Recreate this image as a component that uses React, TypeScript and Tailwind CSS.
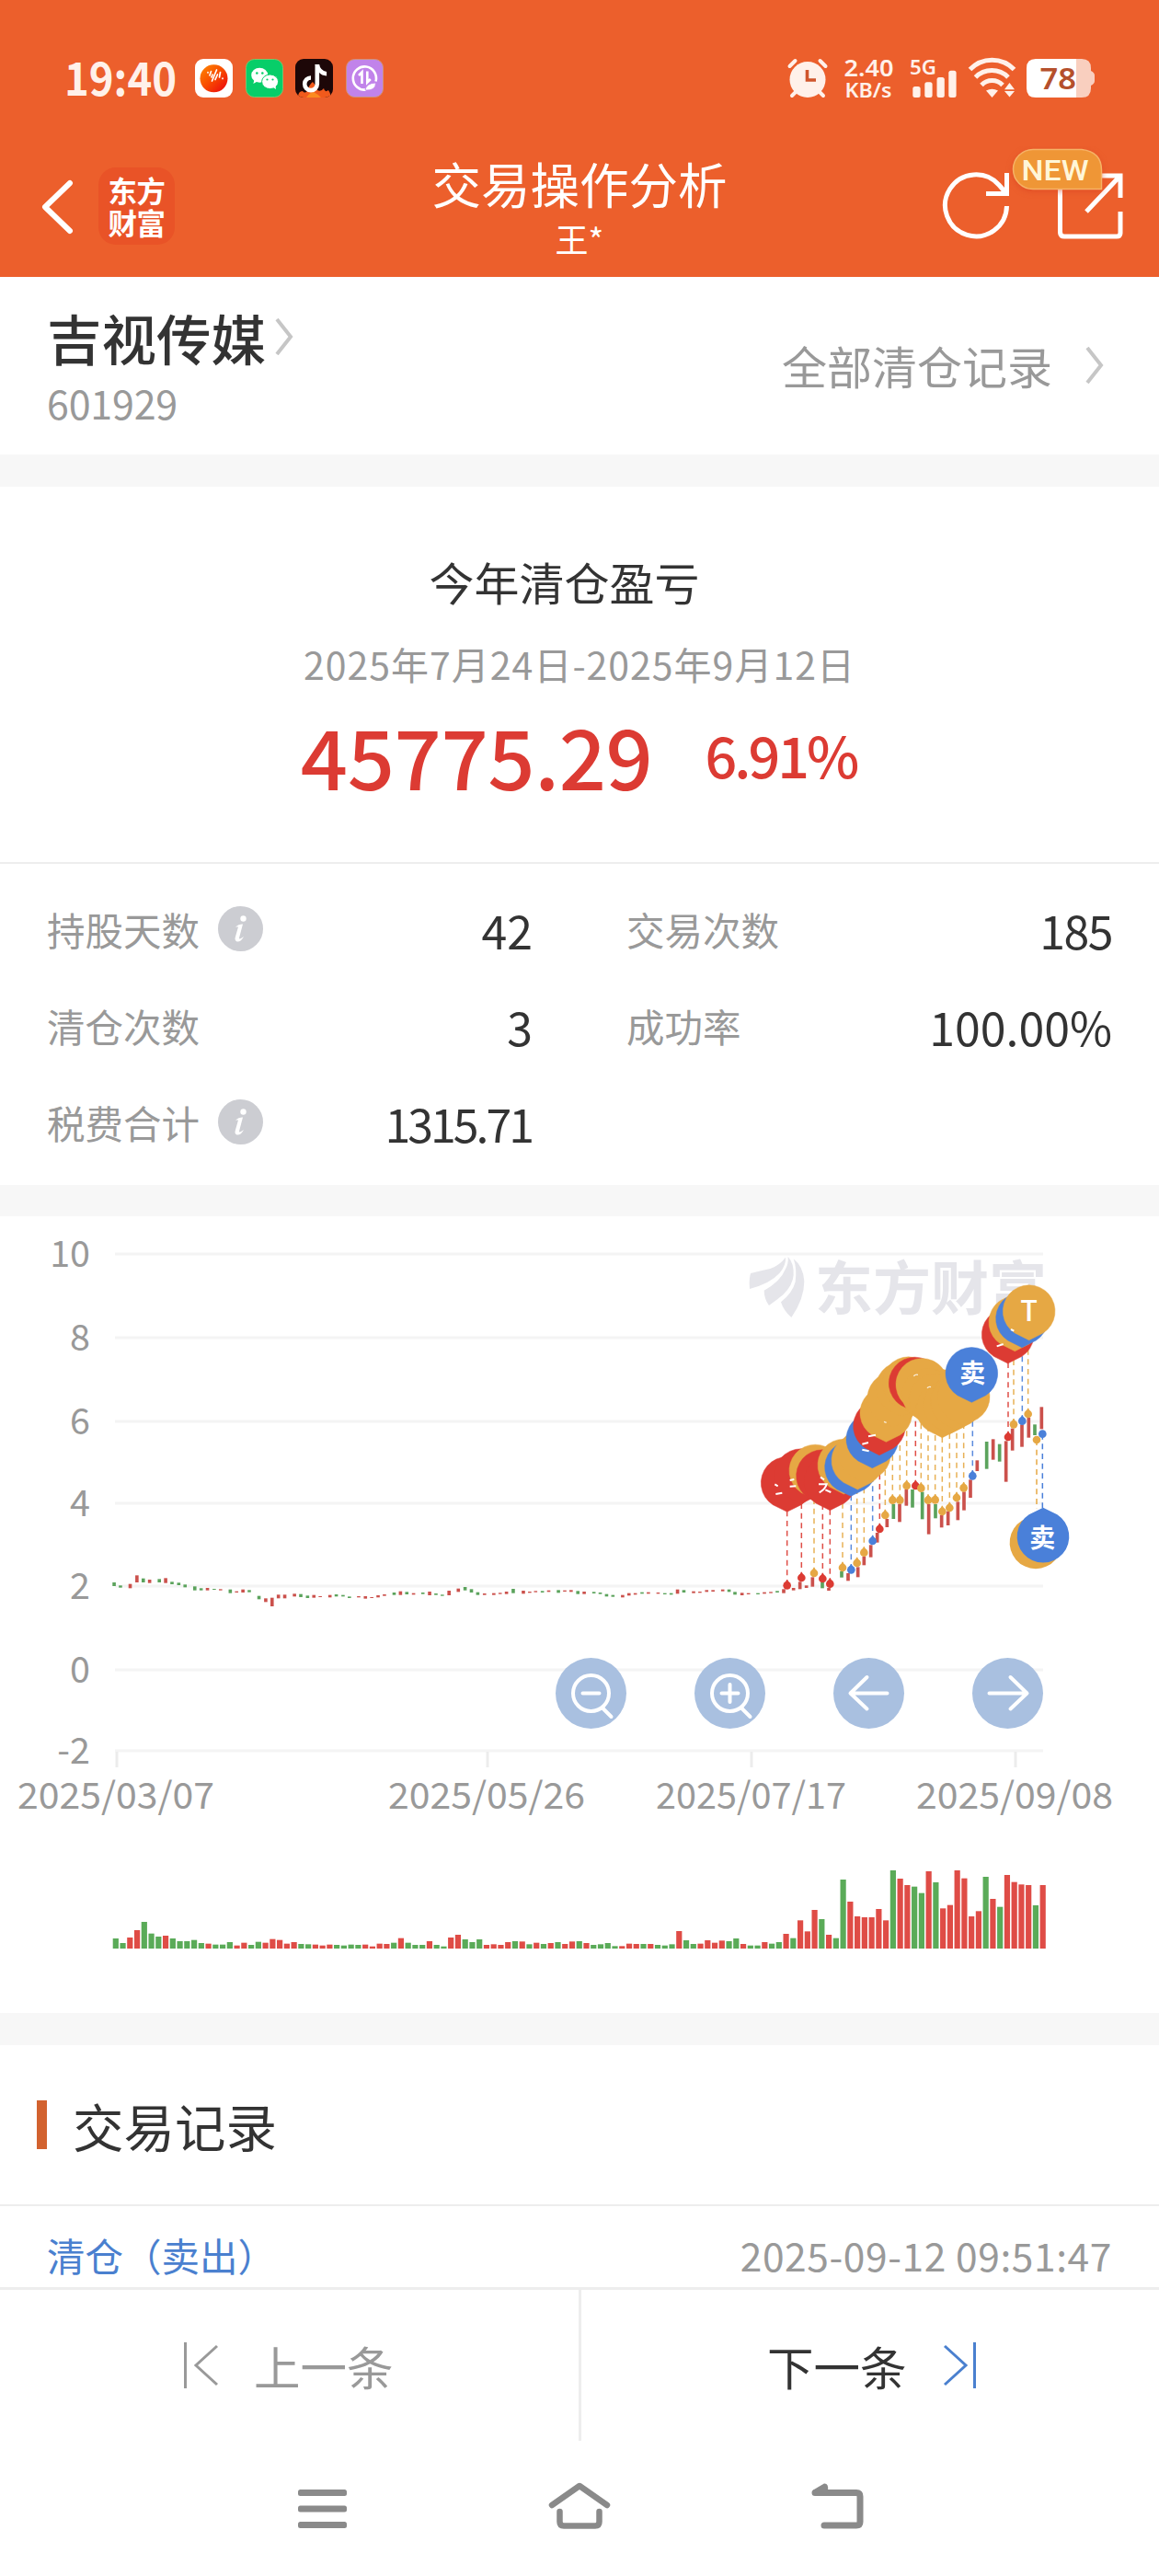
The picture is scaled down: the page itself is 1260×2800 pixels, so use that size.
import React from "react";

const RED = "#dc3b33";
const GOLD = "#e6a844";
const BLUE = "#4a80d9";

/* ---------- chart data ---------- */

type Candle = [number, number, number, number]; // up(1)/down(0), x, top, bottom

// Quiet stretch, in the plot's compressed time scale
const EARLY: Candle[] = [
  [0, 96, 240, 252], [0, 111, 250, 257], [1, 134, 245, 259], [1, 150, 217, 240], [0, 165, 227, 240], [1, 180, 231, 242],
  [0, 203, 229, 240], [1, 218, 226, 242], [0, 233, 238, 246], [0, 249, 241, 249], [0, 264, 247, 256], [0, 287, 253, 266],
  [0, 302, 259, 266], [1, 317, 258, 266], [0, 333, 261, 264], [1, 348, 262, 266], [0, 371, 263, 275], [1, 386, 269, 273],
  [1, 401, 263, 273], [0, 416, 265, 272], [0, 439, 284, 295], [1, 455, 292, 304], [1, 470, 290, 318], [1, 485, 280, 292],
  [1, 500, 280, 292], [1, 523, 277, 286], [0, 538, 278, 288], [0, 554, 283, 291], [1, 569, 281, 290], [1, 584, 285, 288],
  [1, 607, 281, 289], [0, 622, 279, 286], [0, 638, 281, 286], [0, 653, 286, 291], [1, 675, 285, 289], [1, 691, 285, 293],
  [1, 706, 288, 291], [1, 721, 282, 289], [1, 736, 279, 284], [0, 759, 273, 281], [1, 774, 269, 281], [0, 789, 271, 279],
  [1, 805, 275, 280], [0, 827, 273, 278], [1, 843, 270, 282], [0, 858, 276, 281], [0, 873, 280, 284], [1, 889, 267, 282],
  [1, 911, 260, 271], [0, 927, 255, 266], [0, 942, 262, 273], [0, 957, 272, 281], [1, 973, 276, 281], [1, 995, 275, 281],
  [1, 1010, 274, 278], [1, 1025, 270, 278], [0, 1041, 261, 275], [1, 1065, 267, 277], [1, 1080, 270, 274], [1, 1094, 268, 272],
  [0, 1110, 268, 273], [1, 1125, 266, 271], [0, 1148, 265, 274], [1, 1163, 266, 270], [1, 1178, 265, 271], [0, 1194, 268, 278],
  [1, 1209, 270, 278], [0, 1232, 271, 276], [0, 1247, 273, 278], [0, 1262, 278, 286], [0, 1277, 281, 287], [1, 1300, 281, 289],
  [1, 1315, 275, 283], [1, 1330, 275, 280], [0, 1346, 272, 277], [1, 1361, 272, 277], [1, 1384, 273, 277], [0, 1400, 275, 279],
  [0, 1415, 275, 280], [1, 1430, 263, 277], [0, 1445, 265, 273], [1, 1468, 269, 275], [1, 1483, 270, 274], [1, 1499, 265, 271],
  [1, 1514, 265, 270], [1, 1537, 263, 269], [0, 1552, 263, 271], [0, 1566, 271, 280],
];

// Active stretch, in the marker layer's coordinates
const LATE: Candle[] = [
  [1, 80, 1174, 1182], [1, 101, 1175, 1179], [0, 132, 1175, 1179], [1, 153, 1172, 1177], [1, 174, 1171, 1175],
  [0, 195, 1168, 1173], [1, 216, 1162, 1175], [1, 248, 1158, 1166], [1, 269, 1138, 1162], [1, 290, 1150, 1158],
  [1, 310, 1123, 1154], [0, 342, 1139, 1159], [1, 363, 1158, 1167], [0, 405, 1104, 1124], [1, 426, 1110, 1135],
  [1, 458, 1090, 1123], [1, 478, 1056, 1084], [1, 500, 1018, 1058], [1, 521, 978, 1010], [1, 553, 933, 960],
  [0, 574, 885, 933], [1, 594, 885, 943], [1, 616, 837, 890], [0, 636, 837, 896], [0, 668, 845, 934], [1, 689, 885, 983],
  [0, 711, 885, 931], [1, 731, 921, 961], [1, 752, 908, 954], [1, 784, 877, 937], [1, 804, 844, 905], [1, 825, 805, 864],
  [1, 847, 742, 777], [0, 878, 681, 770], [1, 899, 673, 740], [0, 920, 689, 746], [1, 941, 679, 812], [1, 962, 638, 710],
  [1, 993, 625, 698], [1, 1015, 603, 668], [0, 1035, 625, 660], [1, 1057, 568, 640],
];

// x of the dashed stem, its dot, then the pin's centre
type Trade = [string, number, number, number, number];
const TRADES: Trade[] = [
  [RED, 227, 1149, 227, 816], [RED, 274, 1124, 272, 790], [GOLD, 315, 1109, 319, 776], [RED, 343, 1127, 342, 793],
  [RED, 367, 1144, 367, 811], [GOLD, 408, 1091, 412, 758], [BLUE, 436, 1098, 435, 765], [GOLD, 455, 1076, 457, 743],
  [GOLD, 478, 1042, 480, 722], [BLUE, 506, 1004, 505, 673], [RED, 529, 965, 528, 631], [GOLD, 547, 920, 550, 588],
  [GOLD, 571, 871, 574, 540], [GOLD, 595, 871, 602, 506], [GOLD, 617, 824, 623, 490], [RED, 646, 824, 644, 491],
  [GOLD, 664, 832, 667, 495], [GOLD, 687, 871, 687, 527], [GOLD, 710, 870, 710, 545], [GOLD, 733, 908, 733, 574],
  [GOLD, 757, 896, 757, 562], [GOLD, 780, 863, 780, 550], [GOLD, 803, 831, 803, 535], [BLUE, 832, 792, 829, 459],
  [RED, 948, 665, 947, 332], [GOLD, 966, 624, 970, 292], [BLUE, 994, 613, 993, 280], [GOLD, 1013, 590, 1016, 256],
];

const VOLUME =
  "g291 g306 r288 r264 g237 g275 g285 r282 g291 g300 g300 g296 g306 r308 g311 g311 g303 r314 r305 g312 g302 r305 r293 r296 r308 r303 g309 g310 r311 r314 r311 g312 g314 g311 g312 r311 r317 r308 r309 g305 r290 g305 g312 g312 r300 g312 g317 r288 r279 g294 g303 g294 r312 r310 r312 r303 g300 r301 g310 r305 g309 r306 g303 r309 r301 g300 r306 g312 g310 g306 g316 r316 r308 r309 g309 r309 g312 g314 g310 r267 g297 g309 r308 r297 r305 r298 g300 g291 r309 g314 g314 r303 g308 g303 r276 g290 r232 r268 r198 g228 r279 g290 g99 r171 r219 r222 r222 r195 r232 g69 r96 r117 g122 g143 r72 g108 r193 r182 r69 r95 r219 r202 g90 r162 g188 r84 r107 r115 r117 g183 r117".split(
    " ",
  );

const candleColor = (up: number) => (up ? "#cb514c" : "#5ba35c");

const pinPath = (x: number, y: number) =>
  `M${x} ${y + 94}L${x - 46} ${y + 71}A85 85 0 1 1 ${x + 46} ${y + 71}Z`;

const GRID: [number, string][] = [
  [1363, "10"], [1454, "8"], [1545, "6"], [1634, "4"], [1724, "2"], [1815, "0"], [1903, "-2"],
];
const DATES: [number, number, number, string][] = [
  [127, 19, 214, "2025/03/07"], [530, 422, 214, "2025/05/26"], [817, 713, 207, "2025/07/17"], [1104, 996, 214, "2025/09/08"],
];

function TradeChart() {
  return (
    <svg
      className="block h-[866px] w-full"
      viewBox="0 1322 1260 866"
      fontFamily='"Noto Sans CJK SC", sans-serif'
    >
      <clipPath id="plot">
        <rect x="120" y="1330" width="1014" height="600" />
      </clipPath>
      <g stroke="#f4f4f4" strokeWidth="3">
        {GRID.map(([y]) => (
          <path key={y} d={`M125 ${y}H1134`} />
        ))}
      </g>
      <g stroke="#ececec" strokeWidth="3">
        {DATES.map(([x]) => (
          <path key={x} d={`M${x} 1904V1921`} />
        ))}
      </g>
      <g fill="#999" fontSize="39.5" textAnchor="end">
        {GRID.map(([y, t]) => (
          <text key={y} x="98" y={y + 14}>{t}</text>
        ))}
      </g>
      <g fill="#999" fontSize="39.5">
        {DATES.map(([, x, w, t]) => (
          <text key={t} x={x} y="1966" textLength={w} lengthAdjust="spacingAndGlyphs">{t}</text>
        ))}
      </g>

      <g fill="#e5e5ea" clipPath="url(#plot)">
        <g transform="translate(780 1340) scale(.33333)">
          <path d="M105 183Q102 155 108 132Q140 124 172 117Q203 106 222 80Q224 104 204 130Q172 166 105 183Z" />
          <path d="M152 188Q205 160 222 118Q232 100 230 78Q250 100 248 138Q246 170 214 202Q190 222 168 237Q152 215 152 188Z" />
          <path d="M248 85Q280 110 283 158Q283 215 241 276Q216 255 207 226Q245 196 254 160Q260 118 248 85Z" />
        </g>
        <text x="886" y="1423" fontSize="63" fontWeight="700">东方财富</text>
      </g>

      {EARLY.map(([up, x, t, b]) => (
        <rect key={x} x={78.2 + x / 2.178} y={1640 + t / 3} width="3.6" height={(b - t) / 3} fill={candleColor(up)} />
      ))}

      <g transform="translate(780 1340) scale(.33333)">
        {LATE.map(([up, x, t, b]) => (
          <rect key={x} x={x - 5.5} y={t} width="11" height={b - t} fill={candleColor(up)} />
        ))}
        {TRADES.map(([c, x, y, , py]) => (
          <g key={x} fill={c}>
            <path d={`M${x} ${y}V${py + 90}`} stroke={c} strokeWidth="4.5" strokeDasharray="18 14" fill="none" opacity=".9" />
            <circle cx={x} cy={y + 1} r="13" />
            <path d={`M${x - 7} ${y - 9}L${x} ${y - 18}L${x + 7} ${y - 9}Z`} />
          </g>
        ))}
        <path d="M1041 675V900" stroke={GOLD} strokeWidth="4.5" strokeDasharray="18 14" />
        <path d="M1060 656V900" stroke={BLUE} strokeWidth="4.5" strokeDasharray="18 14" />
        <circle cx="1041" cy="675" r="13" fill={GOLD} />
        <circle cx="1060" cy="656" r="13" fill={BLUE} />

        <path d="M700 440L829 459L803 630L733 664L690 600L600 590L560 660L520 560L600 470Z" fill={GOLD} />
        {TRADES.map(([c, x, , px, py]) => (
          <path key={x} d={pinPath(px, py)} fill={c} stroke={c} strokeWidth="1.5" />
        ))}
        <path d={pinPath(1038, 1010)} fill={GOLD} transform="rotate(180 1038 1010)" />
        <path d={pinPath(1062, 990)} fill={BLUE} transform="rotate(180 1062 990)" />
        <g stroke="#fff" strokeWidth="6" fill="none">
          <path d="M187 820l10 6M190 852l21-4M236 807l14-3M236 827l20-1M336 797l12 8M330 820l26 0q-4 16-24 27M352 838l18 8" />
          <path d="M472 689l20-5M472 707l22 5M492 664l24-5M911 370l21-7M957 315l10 5" />
          <path d="M543 616l8 3M640 467q6-6 14-4M684 506q6-6 12-3" strokeWidth="4" opacity=".8" />
        </g>
        <g fill="#fff" textAnchor="middle" fontWeight="700">
          <text x="832" y="488" fontSize="84">卖</text>
          <text x="1060" y="1026" fontSize="84">卖</text>
          <text x="1016" y="289" fontSize="92" fontWeight="500">T</text>
        </g>
      </g>

      {[642.5, 793.5, 944.5, 1095.5].map((x, i) => (
        <g key={x} fill="none" stroke="#fff" strokeWidth="4" strokeLinecap="round" strokeLinejoin="round">
          <circle cx={x} cy="1840.5" r="38.5" fill="#a3bbde" fillOpacity=".93" stroke="none" />
          {i < 2 && (
            <>
              <circle cx={x} cy="1840.5" r="19.5" />
              <path d={`M${x + 13} 1857L${x + 22} 1866M${x - 9} 1840.5h18`} />
            </>
          )}
          {i === 1 && <path d={`M${x} 1831v19`} />}
          {i === 2 && <path d={`M${x + 20} 1840.5h-40M${x - 2} 1823l-18 17.5l18 17`} />}
          {i === 3 && <path d={`M${x - 20} 1840.5h40M${x + 3} 1823l18 17.5l-18 17`} />}
        </g>
      ))}

      {VOLUME.map((v, i) => {
        const h = (324 - Number(v.slice(1))) / 3;
        return (
          <rect key={i} x={122.7 + i * 7.753} y={2118 - h} width="6.2" height={h} fill={v[0] === "r" ? "#df4c46" : "#5aab58"} />
        );
      })}
    </svg>
  );
}

/* ---------- header ---------- */

const ICON = "h-[42px] w-[41px]";

function StatusBar() {
  return (
    <div className="mt-[64px] flex h-[42px] items-center pr-[70px] pl-[70px] text-[#fff1ea]">
      <svg className="h-[42px] w-[142px] overflow-visible" viewBox="0 0 142 42">
        <text x="0" y="40" fontSize="50" fontWeight="700" textLength="122" lengthAdjust="spacingAndGlyphs" fill="#fff1ea" fontFamily='"Noto Sans CJK SC", sans-serif'>19:40</text>
      </svg>
      <div className="flex gap-[13.5px]">
        <svg className={ICON} viewBox="0 0 41 42">
          <defs>
            <linearGradient id="sun" x1="0" y1="0" x2="1" y2="1">
              <stop offset="0" stopColor="#ff8a00" />
              <stop offset=".5" stopColor="#f84a00" />
              <stop offset="1" stopColor="#ea0010" />
            </linearGradient>
          </defs>
          <rect width="41" height="42" rx="9" fill="#fff" />
          <circle cx="20.500" cy="21.300" r="15" fill="url(#sun)" />
          <path d="M14 14.500v.5M17.500 13.500l-1.500 4.500M19 17l-1 3M23.500 12l-5 12M24.500 17l-2.500 5.500M27.500 14.500l-1 5.500M30 21v.5" stroke="#fff" strokeWidth="1.700" strokeLinecap="round" />
        </svg>
        <svg className={ICON} viewBox="0 0 41 42">
          <rect x=".5" y=".5" width="40" height="41" rx="9" fill="#07ce69" stroke="#7cc46c" />
          <ellipse cx="15.200" cy="17.700" rx="9" ry="8" fill="#fff" />
          <path d="M9.500 23l-1.200 4l4.500-2.500z" fill="#fff" />
          <ellipse cx="26.600" cy="24.800" rx="9" ry="7.800" fill="#fff" stroke="#07ce69" strokeWidth="1" />
          <path d="M30 31l3 2l-.5-4z" fill="#fff" />
          <g fill="#07ce69">
            <circle cx="12.300" cy="15.500" r="1.300" /><circle cx="18.300" cy="15.500" r="1.300" />
            <circle cx="23.500" cy="22.500" r="1.100" /><circle cx="29.500" cy="22.500" r="1.100" />
          </g>
        </svg>
        <svg className={ICON} viewBox="0 0 41 42">
          <clipPath id="tk"><rect width="41" height="42" rx="9" /></clipPath>
          <g clipPath="url(#tk)">
            <rect width="41" height="42" fill="#1d0708" />
            <path d="M3 42Q3 35 8 35Q10 38 13 35Q15 28 19 25Q23 29 24 34Q28 36 31 32Q32 37 36 34Q39 38 38 42Z" fill="#f15a1c" />
            <path d="M12 42Q16 36 20 36Q24 38 28 42Z" fill="#fb8a1f" />
            <path d="M23.800 6V27.500A6.800 6.800 0 1 1 17 20.500" fill="none" stroke="#fff" strokeWidth="4.600" />
            <path d="M21.500 6h4.600q1 6.500 8 8v4.600q-5.500-.5-8-3.500z" fill="#fff" />
          </g>
        </svg>
        <svg className={ICON} viewBox="0 0 41 42" fill="none" stroke="#fff">
          <rect x=".5" y=".5" width="40" height="41" rx="9" fill="#c183ea" stroke="#d0937b" />
          <path d="M22 33.500A12.600 12.600 0 1 1 32.500 24.500" strokeWidth="2.600" />
          <path d="M14 18l3.500-3.500V27M23.300 13.500V25.500l3.500-3.500" strokeWidth="2.600" />
          <path d="M21 34Q22 26.500 32.500 26Q32.500 35 21 34Z" fill="#fff" stroke="#c183ea" strokeWidth=".8" />
        </svg>
      </div>

      <svg
        className="ml-auto h-[42px] w-[334px] overflow-visible"
        viewBox="856 64 334 42"
        fill="#fff1ea"
        fontFamily='"Noto Sans", sans-serif'
        fontWeight="700"
      >
        <circle cx="878" cy="86.500" r="19.500" />
        <g fill="none" stroke="#fff1ea" strokeLinecap="round" strokeWidth="4">
          <path d="M858.500 72L864.500 66M897.500 72L891.500 66M861 104l4-4M895 104l-4-4" />
          <path d="M877.500 76v11h9.500" stroke="#d0552c" strokeWidth="3.600" strokeLinecap="butt" />
        </g>
        <text x="917.500" y="83" fontSize="26" fontWeight="600" textLength="54" lengthAdjust="spacingAndGlyphs">2.40</text>
        <text x="918.500" y="105.500" fontSize="22" fontWeight="600" textLength="51" lengthAdjust="spacingAndGlyphs">KB/s</text>
        <text x="989" y="81" fontSize="22" fontWeight="600" textLength="29" lengthAdjust="spacingAndGlyphs">5G</text>
        <rect x="992.300" y="94" width="8.300" height="12" rx="2.500" />
        <rect x="1005.300" y="89.300" width="8.300" height="16.700" rx="2.500" />
        <rect x="1018.500" y="84" width="8.300" height="22" rx="2.500" />
        <rect x="1031.300" y="76.700" width="8.300" height="29.300" rx="2.500" />
        <g fill="none" stroke="#fff1ea" strokeWidth="5">
          <path d="M1054.500 75.500A33 33 0 0 1 1102.500 75.500" />
          <path d="M1060.500 84A25 25 0 0 1 1096 84" />
          <path d="M1067 92.500A16 16 0 0 1 1090 92.500" />
        </g>
        <path d="M1072 98.500Q1078.500 95 1085 98.500L1078.500 106Z" />
        <path d="M1089 106V96L1097.500 86L1106 96V106Z" fill="#ec5f2c" />
        <path d="M1092 97.200l5.500-7.200l5.500 7.200zM1092 99h11l-5.500 6.500z" />
        <path d="M1126 64H1170V106H1126Q1116 106 1116 96V74Q1116 64 1126 64Z" fill="#fff" />
        <path d="M1170 64H1176Q1186 64 1186 74V77Q1190 79 1190 82V88Q1190 91 1186 93V96Q1186 106 1176 106H1170Z" fill="#f9cfbf" />
        <text x="1130.500" y="97" fontSize="33" fontWeight="600" textLength="39.500" lengthAdjust="spacingAndGlyphs" fill="#b5502c">78</text>
      </svg>
    </div>
  );
}

function NavBar() {
  return (
    <div className="grid h-[195px] grid-cols-[1fr_auto_1fr] text-white">
      <div className="flex items-start pt-[76px] pl-[44px]">
        <svg className="mt-[13px] h-[60px] w-[38px]" viewBox="0 0 38 60" fill="none" stroke="#fff" strokeWidth="6" strokeLinecap="round" strokeLinejoin="round">
          <path d="M32 4L5 30L32 56" />
        </svg>
        <div className="ml-[25px] flex h-[84px] w-[83px] flex-col items-center justify-center rounded-[19px] bg-[#e95327] text-[31.5px] leading-[34px] font-bold tracking-[-0.5px]">
          <span className="h-[35px]">东方</span>
          <span className="h-[36px]">财富</span>
        </div>
      </div>
      <div className="flex flex-col items-center pt-[61px]">
        <h1 className="text-[53.5px] leading-[64px]">交易操作分析</h1>
        <span className="mt-[10px] text-[36px] leading-[36px]">王*</span>
      </div>
      <div className="flex justify-end pt-[53px] pr-[36px]">
        <svg className="h-[110px] w-[204px]" viewBox="1020 159 204 110" fill="none" stroke="#fff" strokeWidth="5">
          <path d="M1094.500 224A33.500 33.500 0 1 1 1086 201L1093 209" />
          <path d="M1094.500 188V210.500H1072" />
          <path d="M1198 191H1218V215M1218 230V253Q1218 257 1214 257H1157Q1152.500 257 1152.500 252V206M1217 192L1181 230" />
          <g filter="drop-shadow(0 2px 3px #d8402080)">
            <path d="M1123 162.500H1176Q1197.500 165 1197.500 185V205.500H1123A21.500 21.500 0 0 1 1123 162.500Z" fill="#ef9636" stroke="#f6b266" strokeWidth="1.500" />
          </g>
          <text x="1110.500" y="195.500" fill="#fff6d8" stroke="none" fontSize="31" fontWeight="500" textLength="73" lengthAdjust="spacingAndGlyphs" fontFamily='Roboto, sans-serif'>NEW</text>
        </svg>
      </div>
    </div>
  );
}

/* ---------- content ---------- */

function Chevron({ className = "" }: { className?: string }) {
  return (
    <svg className={"h-[40px] w-[20px] " + className} viewBox="0 0 20 40" fill="none" stroke="#c6c6c6" strokeWidth="4">
      <path d="M2 1L17 20L2 39" />
    </svg>
  );
}

function Info() {
  return (
    <svg className="-mt-[1px] ml-[20px] h-[49px] w-[49px]" viewBox="0 0 49 49">
      <circle cx="24.500" cy="24.500" r="24.500" fill="#cccdd2" />
      <circle cx="27.500" cy="13.500" r="3.200" fill="#fff" />
      <path d="M19 22.500Q23 19 27 19.500L23 34.500Q23 37 28 33Q25 39 20.500 38.500Q17.500 37.500 19 33L22 22.500Z" fill="#fff" />
    </svg>
  );
}

function Stat({ label, value, info, tracking = "" }: { label: string; value: string; info?: boolean; tracking?: string }) {
  return (
    <div className="flex h-[105px] items-center">
      <span className="text-[41.5px] leading-[60px] text-[#999]">{label}</span>
      {info && <Info />}
      <span className={"ml-auto text-[50px] leading-[60px] text-[#333] " + tracking}>{value}</span>
    </div>
  );
}

const Band = ({ className = "" }: { className?: string }) => <div className={"bg-[#f7f7f7] " + className} />;

export default function App() {
  return (
    <div className="flex h-[2800px] w-[1260px] flex-col overflow-hidden bg-white font-['Noto_Sans_CJK_SC','Noto_Sans',sans-serif] text-[#333]">
      <header className="flex h-[301px] flex-col bg-[#ec5f2c]">
        <StatusBar />
        <NavBar />
      </header>

      <section className="flex h-[193px] items-start justify-between pr-[60px] pl-[51px]">
        <div className="pt-[30px]">
          <div className="flex items-center">
            <h2 className="text-[59.5px] leading-[70px] font-medium">吉视传媒</h2>
            <Chevron className="ml-[10px]" />
          </div>
          <div className="mt-[1px] text-[43px] leading-[70px] tracking-[-0.2px] text-[#999]">601929</div>
        </div>
        <div className="flex items-center pt-[61px]">
          <span className="text-[49px] leading-[70px] text-[#999]">全部清仓记录</span>
          <Chevron className="ml-[36px]" />
        </div>
      </section>

      <Band className="h-[35px]" />

      <section className="flex h-[408px] flex-col items-center">
        <h3 className="mt-[69px] -ml-[33px] text-[49px] leading-[68px]">今年清仓盈亏</h3>
        <p className="mt-[25px] text-[41px] leading-[60px] tracking-[1px] text-[#999]">2025年7月24日-2025年9月12日</p>
        <div className="mt-[16px] flex items-center pr-[2px] text-[#dc3b33]">
          <span className="text-[90px] leading-[106px] font-medium tracking-[-0.4px]">45775.29</span>
          <span className="ml-[57px] text-[61px] leading-[106px] font-medium tracking-[-3px]">6.91%</span>
        </div>
      </section>

      <section className="grid h-[351px] grid-cols-[528px_528px] content-start justify-between border-t-2 border-[#ededed] pt-[18px] pr-[51px] pl-[51px]">
        <Stat label="持股天数" value="42" info />
        <Stat label="交易次数" value="185" tracking="tracking-[-1.5px]" />
        <Stat label="清仓次数" value="3" />
        <Stat label="成功率" value="100.00%" />
        <Stat label="税费合计" value="1315.71" info tracking="tracking-[-3px] pr-[1px]" />
      </section>

      <Band className="h-[34px]" />
      <TradeChart />
      <Band className="h-[35px]" />

      <section className="flex h-[175px] items-center border-b-2 border-[#ededed] pl-[40px]">
        <div className="h-[53px] w-[11px] bg-[#d2622f]" />
        <h3 className="ml-[28px] text-[55.5px] leading-[60px]">交易记录</h3>
      </section>
      <section className="flex h-[88px] items-center justify-between pt-[17px] pr-[51px] pl-[51px]">
        <span className="text-[41.5px] leading-[60px] text-[#4a80cf]">清仓（卖出）</span>
        <span className="text-[42.5px] leading-[60px] tracking-[0.6px] text-[#999]">2025-09-12 09:51:47</span>
      </section>

      <nav className="grid h-[167px] grid-cols-[632px_1fr] border-t-3 border-[#ededed]">
        <div className="flex items-center border-r-3 border-[#ededed] pl-[199px] text-[#999]">
          <svg className="h-[50px] w-[39px]" viewBox="0 0 39 50" fill="none" stroke="#999" strokeWidth="3">
            <path d="M2.500 0V50M37 4L14 25L37 46" />
          </svg>
          <span className="ml-[38px] text-[50.500px] leading-[60px]">上一条</span>
        </div>
        <div className="flex items-center pl-[202px]">
          <span className="text-[50.500px] leading-[60px]">下一条</span>
          <svg className="ml-[39px] h-[50px] w-[39px]" viewBox="0 0 39 50" fill="none" stroke="#4a80cf" strokeWidth="3">
            <path d="M34.500 0V50M2 4L25 25L2 46" />
          </svg>
        </div>
      </nav>

      <footer className="flex flex-1 items-start justify-between pt-[42px] pr-[321px] pl-[324px]">
        <svg className="mt-[10px] h-[46px] w-[53px]" viewBox="0 0 53 46" fill="#8a8a8a">
          <rect y="1" width="53" height="7" rx="2.500" />
          <rect y="18.500" width="53" height="7" rx="2.500" />
          <rect y="36" width="53" height="7" rx="2.500" />
        </svg>
        <svg className="h-[56px] w-[68px]" viewBox="0 0 68 56" fill="none" stroke="#8a8a8a" strokeWidth="6.500" strokeLinecap="round">
          <path d="M4 28L34 7L64 28" strokeLinejoin="round" />
          <path d="M12.500 35V46Q12.500 50.500 17 50.500H51Q55.500 50.500 55.500 46V35" />
        </svg>
        <svg className="h-[56px] w-[57px]" viewBox="0 0 57 56" fill="none" stroke="#8a8a8a" strokeWidth="7" strokeLinecap="round" strokeLinejoin="round">
          <path d="M4 14.500H49Q53 14.500 53 18.500V46Q53 50 49 50H14" />
          <path d="M3 12L14 5.500Q18 5 17 12L15 14H4Z" fill="#8a8a8a" strokeWidth="2" />
        </svg>
      </footer>
    </div>
  );
}
